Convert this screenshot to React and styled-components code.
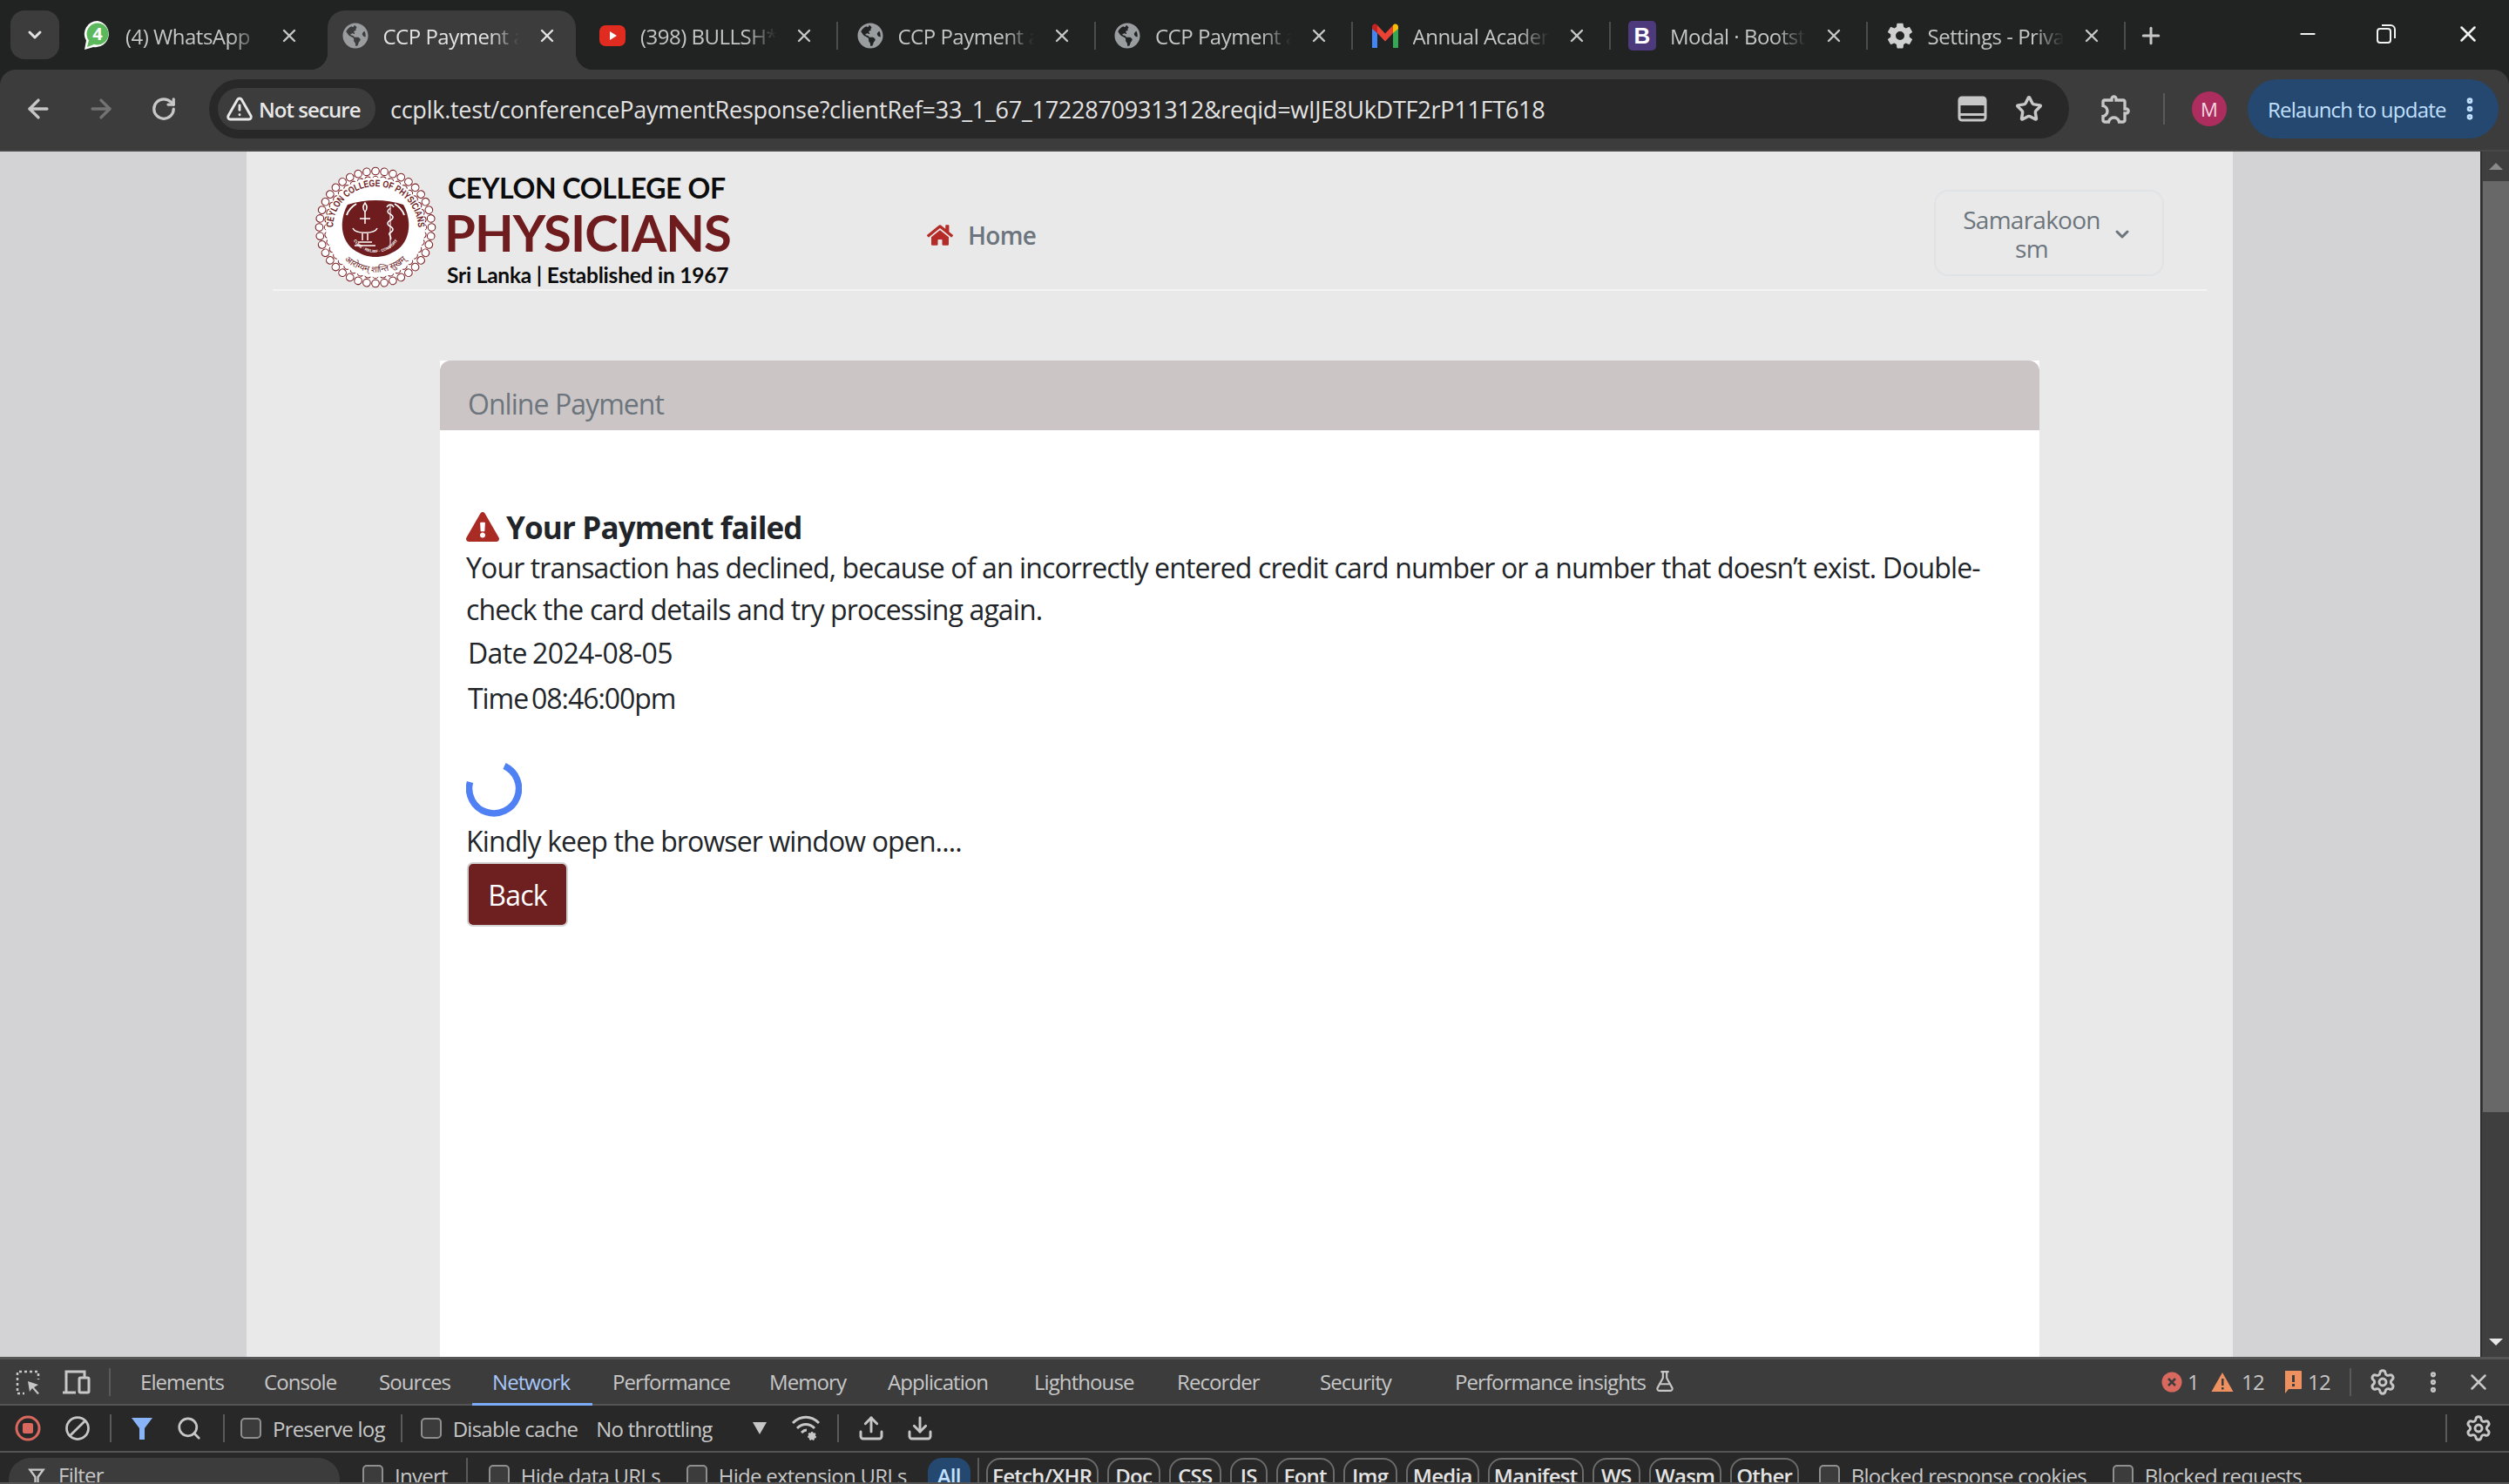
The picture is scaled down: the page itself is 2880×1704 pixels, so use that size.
import React from "react";
import styled, { createGlobalStyle } from "styled-components";
import {
  ArrowLeft, ArrowRight, RotateCw, TriangleAlert, Star, EllipsisVertical, Plus, Minus, X,
  Ban, Search, Upload, Download, Settings, FlaskConical, ChevronDown,
} from "lucide-react";
import { FaGlobeAmericas, FaHome, FaExclamationTriangle } from "react-icons/fa";
import { IoSettingsSharp } from "react-icons/io5";
import { MdOutlineExtension } from "react-icons/md";

const UI = `"Open Sans", "Noto Sans", sans-serif`;

const Global = createGlobalStyle`
  html, body { margin: 0; padding: 0; background: #212323; }
  * { box-sizing: border-box; }
  body { font-family: ${UI}; }
`;

const Shell = styled.div`
  width: 2880px;
  height: 1704px;
  display: flex;
  flex-direction: column;
  overflow: hidden;
`;

/* browser chrome */
const TabStrip = styled.div`
  height: 80px;
  flex: none;
  display: flex;
  align-items: flex-end;
  background: #212323;
`;
const TabMenu = styled.div`
  width: 56px;
  height: 56px;
  margin: 0 12px 12px 12px;
  border-radius: 16px;
  background: #3c3c3c;
  color: #e3e3e3;
  display: flex;
  align-items: center;
  justify-content: center;
`;
const Tab = styled.div`
  position: relative;
  width: 285px;
  height: 68px;
  margin-right: 10.5px;
  padding: 0 21px 10px 16px;
  display: flex;
  align-items: center;
  border-radius: 20px 20px 0 0;
  background: ${(p) => (p.$active ? "#3c3c3c" : "transparent")};
  color: ${(p) => (p.$active ? "#e3e3e3" : "#c4c7c5")};
  &::after {
    content: "";
    display: ${(p) => (p.$sep ? "block" : "none")};
    position: absolute;
    right: -6px;
    top: 13px;
    width: 2px;
    height: 32px;
    background: #4b4d4d;
  }
`;
const Flare = styled.span`
  position: absolute;
  bottom: 0;
  ${(p) => (p.$side === "left" ? "left: -20px;" : "right: -20px;")}
  width: 20px;
  height: 20px;
  background: radial-gradient(circle at ${(p) => (p.$side === "left" ? "0 0" : "100% 0")}, transparent 20px, #3c3c3c 20.5px);
`;
const TabIcon = styled.span`
  width: 32px;
  height: 36px;
  flex: none;
  display: flex;
  align-items: center;
  justify-content: center;
`;
const TabTitle = styled.span`
  width: 156px;
  margin-left: 16px;
  flex: none;
  font-size: 24px;
  letter-spacing: -0.5px;
  white-space: nowrap;
  overflow: hidden;
  -webkit-mask-image: linear-gradient(90deg, #000 78%, transparent 100%);
  mask-image: linear-gradient(90deg, #000 78%, transparent 100%);
`;
const TabClose = styled.span`
  margin-left: auto;
  display: flex;
  color: inherit;
`;
const NewTab = styled.div`
  margin: 0 0 24px 10px;
  color: #c7c7c7;
  display: flex;
`;
const WinControls = styled.div`
  margin-left: auto;
  height: 80px;
  display: flex;
  color: #f2f2f2;
`;
const WinButton = styled.div`
  width: ${(p) => p.$w}px;
  padding-bottom: 2px;
  display: flex;
  align-items: center;
  justify-content: center;
`;
const BootstrapMark = styled.span`
  width: 32px;
  height: 34px;
  border-radius: 5px;
  background: #4d3a7d;
  color: #fff;
  font: 700 26px "Liberation Sans", sans-serif;
  display: flex;
  align-items: center;
  justify-content: center;
`;

const Toolbar = styled.div`
  height: 94px;
  flex: none;
  padding: 0 12px 2px 8px;
  display: flex;
  align-items: center;
  background: #3c3c3c;
  border-bottom: 2px solid #474747;
  border-radius: 18px 18px 0 0;
  color: #c7c7c7;
`;
const NavButton = styled.div`
  width: 72px;
  display: flex;
  justify-content: center;
  color: ${(p) => (p.$dim ? "#737373" : "#c7c7c7")};
`;
const Omnibox = styled.div`
  width: 2135px;
  height: 68px;
  margin-left: 16px;
  padding: 0 30px 0 10px;
  display: flex;
  align-items: center;
  border-radius: 34px;
  background: #282828;
`;
const SecurityChip = styled.div`
  height: 48px;
  width: 181px;
  padding-left: 9px;
  display: flex;
  align-items: center;
  gap: 6px;
  border-radius: 24px;
  background: #3c3c3c;
  color: #e8e8e8;
  font-size: 24px;
  font-weight: 600;
  letter-spacing: -0.95px;
  white-space: nowrap;
`;
const Url = styled.div`
  margin-left: 17px;
  font-size: 27px;
  letter-spacing: -0.25px;
  color: #e3e3e3;
  white-space: nowrap;
`;
const OmniIcons = styled.div`
  margin-left: auto;
  display: flex;
  align-items: center;
  gap: 32px;
`;
const ToolSlot = styled.div`
  width: 108px;
  display: flex;
  justify-content: center;
`;
const ToolSep = styled.div`
  width: 2px;
  height: 36px;
  background: #5a5a5a;
`;
const Avatar = styled.div`
  width: 40px;
  height: 40px;
  margin: 0 24px 0 31px;
  border-radius: 50%;
  background: #ad2d5e;
  color: #f5d7e3;
  font-size: 22px;
  display: flex;
  align-items: center;
  justify-content: center;
`;
const Relaunch = styled.div`
  width: 288px;
  height: 68px;
  padding-left: 23px;
  display: flex;
  align-items: center;
  border-radius: 34px;
  background: #254870;
  color: #c2e0ff;
  font-size: 24px;
  letter-spacing: -0.75px;
  white-space: nowrap;
`;
const RelaunchDots = styled.span`
  margin-left: 11px;
  display: flex;
`;

/* page */
const Viewport = styled.div`
  flex: 1;
  min-height: 0;
  display: grid;
  grid-template-columns: 283px 2280px 1fr 33px;
  background: #d3d3d5;
`;
const Gutter = styled.div``;
const Page = styled.div`
  background: #e9e9e9;
  display: flex;
  flex-direction: column;
  min-height: 0;
`;
const PageHeader = styled.header`
  height: 160px;
  margin: 0 30px;
  padding: 16px 49px 0 48px;
  flex: none;
  display: flex;
  align-items: flex-start;
  border-bottom: 2px solid #f4f4f4;
`;
const SealSvg = styled.svg`
  flex: none;
`;
const LogoText = styled.div`
  margin-left: 9px;
  display: flex;
  flex-direction: column;
  font-family: Lato, "Open Sans", sans-serif;
  font-weight: 700;
  color: #0c0c0c;
`;
const LogoTop = styled.div`
  font-size: 32px;
  line-height: 40px;
  margin: 6px 0 0 4px;
  letter-spacing: -0.4px;
  white-space: nowrap;
`;
const LogoMain = styled.div`
  font-size: 58px;
  line-height: 60px;
  margin-top: 1px;
  color: #6e1c1e;
  letter-spacing: -0.9px;
  white-space: nowrap;
`;
const LogoSub = styled.div`
  font-size: 24.5px;
  line-height: 28px;
  margin: 5px 0 0 3px;
  letter-spacing: -0.22px;
  white-space: nowrap;
`;
const HomeLink = styled.div`
  margin: 61px 0 0 225px;
  display: flex;
  align-items: center;
  gap: 17px;
  color: #6c757d;
  font-size: 28px;
  font-weight: 600;
  letter-spacing: -0.7px;
`;
const UserMenu = styled.div`
  margin: 28px 0 0 auto;
  width: 264px;
  height: 99px;
  padding: 3px 0 0 30px;
  display: flex;
  align-items: center;
  border: 2px solid #e0e3e6;
  border-radius: 16px;
  color: #6c757d;
  font-size: 28px;
  line-height: 33px;
  letter-spacing: -0.75px;
`;
const UserName = styled.div`
  width: 160px;
  text-align: center;
`;
const UserCaret = styled.span`
  margin-left: 12px;
  display: flex;
  color: #6c757d;
`;
const Card = styled.section`
  width: 1836px;
  margin: 80px 0 0 222px;
  flex: 1;
  background: #fff;
  display: flex;
  flex-direction: column;
`;
const CardHead = styled.div`
  height: 80px;
  padding: 28px 32px 0;
  background: #cbc5c5;
  border-radius: 12px 12px 0 0;
  color: #6c757d;
  font-size: 32px;
  line-height: 44px;
  letter-spacing: -0.95px;
`;
const CardBody = styled.div`
  padding: 90px 30px 0;
  color: #212529;
  font-size: 32px;
  line-height: 48px;
  letter-spacing: -0.88px;
`;
const FailTitle = styled.div`
  display: flex;
  align-items: center;
  gap: 8px;
  font-size: 35px;
  line-height: 44px;
  font-weight: 700;
  letter-spacing: -0.85px;
  color: #212529;
  svg { color: #a92b23; margin-bottom: 2px; }
`;
const Para = styled.p`
  margin: 0;
`;
const InfoLine = styled.div`
  margin: ${(p) => p.$top}px 0 0 2px;
  display: flex;
  gap: ${(p) => p.$gap}px;
  letter-spacing: ${(p) => p.$ls}px;
`;
const SpinnerWrap = styled.div`
  margin-top: 48px;
  height: 64px;
  display: flex;
`;
const Kindly = styled.div`
  margin: 6px 0 2px;
  line-height: 44px;
`;
const BackButton = styled.button`
  display: block;
  width: 116px;
  height: 74px;
  margin-left: 1px;
  padding: 0;
  border: 2px solid #d2d2d2;
  border-radius: 7px;
  background: #6e2020;
  color: #fff;
  font-family: ${UI};
  font-size: 32px;
  letter-spacing: -0.8px;
`;

const ScrollTrack = styled.div`
  position: relative;
  background: #3f3f3f;
  border-left: 2px solid #2e2e2e;
  display: flex;
  flex-direction: column;
  align-items: stretch;
`;
const ScrollArrow = styled.div`
  height: 34px;
  flex: none;
  display: flex;
  align-items: center;
  justify-content: center;
  &::before {
    content: "";
    border-left: 8px solid transparent;
    border-right: 8px solid transparent;
    ${(p) => (p.$down ? "border-top: 8px solid #e8e8e8;" : "border-bottom: 8px solid #8a8a8a;")}
  }
`;
const ScrollThumb = styled.div`
  height: 1069px;
  margin-left: 1px;
  background: #686868;
`;
const ScrollSpace = styled.div`
  flex: 1;
`;

/* devtools */
const DevTools = styled.div`
  height: 146px;
  flex: none;
  border-top: 3px solid #555;
  border-bottom: 2px solid #555;
  background: #282828;
  color: #c7c7c7;
  display: flex;
  flex-direction: column;
  font-size: 24px;
  letter-spacing: -0.75px;
`;
const DevTabs = styled.div`
  height: 53px;
  flex: none;
  padding-left: 12px;
  display: flex;
  align-items: center;
  background: #3c3c3c;
  border-bottom: 2px solid #555;
`;
const DevTab = styled.div`
  width: ${(p) => p.$w}px;
  height: 52px;
  padding-left: 23px;
  display: flex;
  align-items: center;
  gap: 9px;
  white-space: nowrap;
  letter-spacing: -0.92px;
  color: ${(p) => (p.$active ? "#a8c7fa" : "#c7c7c7")};
  border-bottom: 3px solid ${(p) => (p.$active ? "#7cacf8" : "transparent")};
  margin-bottom: -2px;
`;
const DevIcon = styled.span`
  width: ${(p) => p.$w || 56}px;
  margin-left: ${(p) => p.$ml || 0}px;
  flex: none;
  display: flex;
  justify-content: center;
  color: ${(p) => p.$c || "#c7c7c7"};
  svg { flex: none; }
`;
const DevSep = styled.span`
  width: 2px;
  height: 32px;
  flex: none;
  margin-left: ${(p) => p.$l || 0}px;
  margin-right: ${(p) => p.$r || 0}px;
  background: #5a5a5a;
`;
const DevRight = styled.div`
  margin-left: auto;
  display: flex;
  align-items: center;
`;
const Counter = styled.span`
  display: flex;
  align-items: center;
  gap: ${(p) => p.$gap || 6}px;
  margin-right: ${(p) => p.$mr}px;
`;
const DevBar = styled.div`
  height: 54px;
  flex: none;
  padding-left: 4px;
  display: flex;
  align-items: center;
  border-bottom: 2px solid #555;
`;
const Check = styled.span`
  width: 24px;
  height: 24px;
  flex: none;
  margin-left: ${(p) => p.$ml || 0}px;
  border: 2px solid #8f8f8f;
  border-radius: 5px;
  background: #3c3c3c;
`;
const CheckLabel = styled.span`
  margin-left: ${(p) => p.$ml || 13}px;
  white-space: nowrap;
`;
const FilterBar = styled.div`
  flex: 1;
  min-height: 0;
  padding: 6px 0 0 10px;
  display: flex;
  align-items: flex-start;
  overflow: hidden;
`;
const FilterInput = styled.div`
  width: 380px;
  height: 50px;
  padding-left: 22px;
  flex: none;
  display: flex;
  gap: 15px;
  border-radius: 25px;
  background: #3c3c3c;
  line-height: 40px;
  svg { margin-top: 11px; }
`;
const Pill = styled.span`
  width: ${(p) => p.$w}px;
  height: 50px;
  flex: none;
  margin-left: ${(p) => (p.$ml === undefined ? 10 : p.$ml)}px;
  border: ${(p) => (p.$on ? "none" : "2px solid #6b6b6b")};
  border-radius: 16px;
  background: ${(p) => (p.$on ? "#254870" : "transparent")};
  color: ${(p) => (p.$on ? "#c2e0ff" : "#e3e3e3")};
  text-align: center;
  line-height: ${(p) => (p.$on ? 42 : 38)}px;
  font-weight: 600;
  white-space: nowrap;
`;
const CheckItem = styled.span`
  display: flex;
  align-items: center;
  height: 40px;
`;
const ClearIcon = styled(Ban)`
  transform: rotate(90deg);
`;

const Globe = () => <FaGlobeAmericas size={30} color="#9a9da0" />;

const WhatsAppIcon = () => (
  <svg width="32" height="36" viewBox="0 0 32 36">
    <path d="M16 1a15 15 0 0 0-13 22.6L1 34l10.400-3A15 15 0 1 0 16 1z" fill="#fff" />
    <circle cx="16" cy="16" r="12.500" fill="#5cb85c" />
    <path d="M4 31l2-8 6 5z" fill="#5cb85c" />
    <text x="16" y="23" textAnchor="middle" fontFamily="Open Sans" fontWeight="700" fontSize="20" fill="#fff">4</text>
  </svg>
);

const YouTubeIcon = () => (
  <svg width="32" height="32" viewBox="0 0 32 32">
    <rect x="1" y="4" width="30" height="24" rx="7" fill="#e02c20" />
    <path d="M13 11l8 5-8 5z" fill="#fff" />
  </svg>
);

const GmailIcon = () => (
  <svg width="32" height="30" viewBox="0 0 32 30">
    <path d="M1 5v24h6V12z" fill="#4285f4" />
    <path d="M31 5v24h-6V12z" fill="#34a853" />
    <path d="M7 3l9 9.500L25 3v9l-9 9.500L7 12z" fill="#ea4335" />
    <path d="M1 5c0-3.500 4-4.500 6-2v9L1 7z" fill="#c5221f" />
    <path d="M31 5c0-3.500-4-4.500-6-2v9l6-5z" fill="#fbbc04" />
  </svg>
);

const CardIcon = () => (
  <svg width="34" height="30" viewBox="0 0 34 30" fill="none">
    <rect x="2" y="2" width="30" height="26" rx="3" stroke="#c7c7c7" strokeWidth="3" />
    <rect x="2" y="2" width="30" height="9" fill="#c7c7c7" />
    <rect x="2" y="20" width="30" height="3" fill="#c7c7c7" />
  </svg>
);

const RestoreIcon = () => (
  <svg width="24" height="24" viewBox="0 0 24 24" fill="none" stroke="#f2f2f2" strokeWidth="2">
    <rect x="2" y="6" width="15" height="16" rx="3" />
    <path d="M7 2h10a5 5 0 0 1 5 5v10" />
  </svg>
);

const InspectIcon = () => (
  <svg width="30" height="30" viewBox="0 0 30 30" fill="none" stroke="#c7c7c7" strokeWidth="2.500">
    <path d="M2 25V3h24v9" strokeDasharray="3 3" />
    <path d="M2 28h8" strokeDasharray="3 3" />
    <path d="M14 14l12 4-5 3 6 7-2 1-6-7-3 4z" fill="#c7c7c7" stroke="none" />
  </svg>
);

const DeviceIcon = () => (
  <svg width="34" height="30" viewBox="0 0 34 30" fill="none" stroke="#c7c7c7" strokeWidth="3">
    <path d="M5 26V3h21v6" />
    <path d="M1 27h15" />
    <rect x="20" y="10" width="11" height="17" rx="1.500" />
  </svg>
);

const RecordIcon = () => (
  <svg width="30" height="30" viewBox="0 0 30 30">
    <circle cx="15" cy="15" r="13" fill="none" stroke="#d9685f" strokeWidth="3" />
    <rect x="9" y="9" width="12" height="12" rx="2" fill="#d9685f" />
  </svg>
);

const FunnelIcon = ({ color, filled, size = 26 }) => (
  <svg width={size} height={size + 2} viewBox="0 0 26 28">
    {filled ? (
      <path d="M1 2h24l-9 12v13h-6V14z" fill={color} />
    ) : (
      <path d="M3 3h20l-8 11v12h-4V14z" fill="none" stroke={color} strokeWidth="3" />
    )}
  </svg>
);

const NetworkConditions = () => (
  <svg width="34" height="34" viewBox="0 0 34 34" fill="none" stroke="#c7c7c7" strokeWidth="3">
    <path d="M2 11c9-9 21-9 30 0" />
    <path d="M7 17c6-6 14-6 20 0" />
    <path d="M12 22c2-2 4-3 6-3" />
    <circle cx="24" cy="26" r="4" fill="#c7c7c7" strokeWidth="2" strokeDasharray="2 1.500" />
  </svg>
);

const ErrorDot = () => (
  <svg width="24" height="24" viewBox="0 0 24 24">
    <circle cx="12" cy="12" r="11.500" fill="#d9685f" />
    <path d="M8 8l8 8M16 8l-8 8" stroke="#3c3c3c" strokeWidth="2.500" />
  </svg>
);

const WarnIcon = () => (
  <svg width="26" height="24" viewBox="0 0 26 24">
    <path d="M13 1l12.500 22H.5z" fill="#ee9060" />
    <rect x="12" y="8" width="2.500" height="8" fill="#3c3c3c" />
    <rect x="12" y="18" width="2.500" height="2.500" fill="#3c3c3c" />
  </svg>
);

const IssueIcon = () => (
  <svg width="22" height="28" viewBox="0 0 22 28">
    <path d="M2 1h18a1 1 0 0 1 1 1v19a1 1 0 0 1-1 1H6l-4 5z" fill="#ee9060" />
    <rect x="10" y="6" width="3" height="8" fill="#3c3c3c" />
    <rect x="10" y="16" width="3" height="3" fill="#3c3c3c" />
  </svg>
);

const scallops = Array.from({ length: 40 }, (_, i) => (i * 360) / 40);

const CollegeSeal = () => (
  <SealSvg width="140" height="142" viewBox="0 0 140 140">
    <defs>
      <path id="sealTop" d="M21 72a49 49 0 1 1 98 0" />
      <path id="sealBottom" d="M20 84a52 52 0 0 0 100 0" />
      <path id="sealMotto" d="M44 84a30 30 0 0 0 52 0" />
    </defs>
    <circle cx="70" cy="70" r="68" fill="#fff" />
    {scallops.map((a) => (
      <g key={a} transform={`rotate(${a} 70 70)`}>
        <circle cx="70" cy="5.500" r="4.300" fill="#fff" stroke="#7c2327" strokeWidth="1.100" />
        <path d="M66.500 15c0-5 7-5 7 0" fill="none" stroke="#7c2327" strokeWidth="1" />
      </g>
    ))}
    <circle cx="70" cy="70" r="57" fill="#fff" />
    <text fontFamily="Liberation Sans" fontWeight="700" fontSize="11" fill="#6e1c1e">
      <textPath href="#sealTop" startOffset="50%" textAnchor="middle" textLength="150" lengthAdjust="spacingAndGlyphs">CEYLON COLLEGE OF PHYSICIANS</textPath>
    </text>
    <path d="M38 44Q70 34 102 44C112 62 110 84 96 95C86 102 78 104 70 104C62 104 54 102 44 95C30 84 28 62 38 44z" fill="#6e1c1e" />
    <path d="M37 56c2-6 6-10 11-13" fill="none" stroke="#fff" strokeWidth="2" />
    <path d="M103 56c-2-6-6-10-11-13" fill="none" stroke="#fff" strokeWidth="2" />
    <g fill="none" stroke="#fff" strokeWidth="1.500">
      <path d="M58 42c3 4 3 7 0 10-3-3-3-6 0-10z" />
      <path d="M58 52v14M52 60h12M44 71c3 7 25 7 28 0M55 77v8M61 77v8M50 87h16M46 91h24" />
      <path d="M87 48c-4 3-4 5 0 7s4 5 0 7-4 5 0 7 4 5 0 7 3 5 0 8" />
      <path d="M83 47c2-4 6-4 8 0" />
      <path d="M87 44v50" strokeWidth="1" />
    </g>
    <text fontFamily="Liberation Sans" fontWeight="700" fontSize="4.500" fill="#fff">
      <textPath href="#sealMotto" startOffset="50%" textAnchor="middle">CURE · RELIEF · COMFORT</textPath>
    </text>
    <text fontFamily="Noto Sans, DejaVu Sans" fontSize="10" fill="#6e1c1e">
      <textPath href="#sealBottom" startOffset="50%" textAnchor="middle">आरोग्यम् शान्ति सुखम्</textPath>
    </text>
  </SealSvg>
);

const Spinner = () => (
  <svg width="64" height="64" viewBox="0 0 64 64">
    <path d="M44 5.500A28.500 28.500 0 1 1 4.500 24" fill="none" stroke="#4f81f4" strokeWidth="7.500" />
  </svg>
);

const tabs = [
  { title: "(4) WhatsApp", icon: <WhatsAppIcon /> },
  { title: "CCP Payment and Registration", icon: <Globe />, active: true },
  { title: "(398) BULLSH*T", icon: <YouTubeIcon />, sep: true },
  { title: "CCP Payment and Registration", icon: <Globe />, sep: true },
  { title: "CCP Payment and Registration", icon: <Globe />, sep: true },
  { title: "Annual Academic Sessions", icon: <GmailIcon />, sep: true },
  { title: "Modal · Bootstrap", icon: <BootstrapMark>B</BootstrapMark>, sep: true },
  { title: "Settings - Privacy", icon: <IoSettingsSharp size={32} color="#d0d0d0" />, sep: true },
];

const devTabs = [
  ["Elements", 142],
  ["Console", 132],
  ["Sources", 130],
  ["Network", 138],
  ["Performance", 180],
  ["Memory", 136],
  ["Application", 168],
  ["Lighthouse", 164],
  ["Recorder", 164],
  ["Security", 155],
];

const pills = [
  ["Fetch/XHR", 129], ["Doc", 61], ["CSS", 60], ["JS", 43], ["Font", 67], ["Img", 62],
  ["Media", 84], ["Manifest", 110], ["WS", 55], ["Wasm", 83], ["Other", 79],
];

export default function App() {
  return (
    <Shell>
      <Global />
      <TabStrip>
        <TabMenu><ChevronDown size={24} strokeWidth={3} /></TabMenu>
        {tabs.map((t, i) => (
          <Tab key={i} $active={t.active} $sep={t.sep}>
            {t.active && <Flare $side="left" />}
            {t.active && <Flare $side="right" />}
            <TabIcon>{t.icon}</TabIcon>
            <TabTitle>{t.title}</TabTitle>
            <TabClose><X size={24} strokeWidth={2.4} /></TabClose>
          </Tab>
        ))}
        <NewTab><Plus size={30} strokeWidth={2.4} /></NewTab>
        <WinControls>
          <WinButton $w={88}><Minus size={26} strokeWidth={2} /></WinButton>
          <WinButton $w={92}><RestoreIcon /></WinButton>
          <WinButton $w={95}><X size={30} strokeWidth={2} /></WinButton>
        </WinControls>
      </TabStrip>

      <Toolbar>
        <NavButton><ArrowLeft size={34} strokeWidth={2.4} /></NavButton>
        <NavButton $dim><ArrowRight size={34} strokeWidth={2.4} /></NavButton>
        <NavButton><RotateCw size={30} strokeWidth={2.6} /></NavButton>
        <Omnibox>
          <SecurityChip><TriangleAlert size={32} strokeWidth={2.2} />Not secure</SecurityChip>
          <Url>ccplk.test/conferencePaymentResponse?clientRef=33_1_67_1722870931312&amp;reqid=wIJE8UkDTF2rP11FT618</Url>
          <OmniIcons>
            <CardIcon />
            <Star size={32} strokeWidth={2.6} />
          </OmniIcons>
        </Omnibox>
        <ToolSlot><MdOutlineExtension size={40} /></ToolSlot>
        <ToolSep />
        <Avatar>M</Avatar>
        <Relaunch>
          Relaunch to update
          <RelaunchDots><EllipsisVertical size={32} strokeWidth={3} /></RelaunchDots>
        </Relaunch>
      </Toolbar>

      <Viewport>
        <Gutter />
        <Page>
          <PageHeader>
            <CollegeSeal />
            <LogoText>
              <LogoTop>CEYLON COLLEGE OF</LogoTop>
              <LogoMain>PHYSICIANS</LogoMain>
              <LogoSub>Sri Lanka | Established in 1967</LogoSub>
            </LogoText>
            <HomeLink><FaHome size={30} color="#b52b27" />Home</HomeLink>
            <UserMenu>
              <UserName>Samarakoon sm</UserName>
              <UserCaret><ChevronDown size={24} strokeWidth={3} /></UserCaret>
            </UserMenu>
          </PageHeader>
          <Card>
            <CardHead>Online Payment</CardHead>
            <CardBody>
              <FailTitle><FaExclamationTriangle size={38} />Your Payment failed</FailTitle>
              <Para>
                Your transaction has declined, because of an incorrectly entered credit card number or a number that doesn’t exist. Double-check the card details and try processing again.
              </Para>
              <InfoLine $top={2} $gap={6} $ls={-0.6}><span>Date</span><span>2024-08-05</span></InfoLine>
              <InfoLine $top={4} $gap={4} $ls={-1.05}><span>Time</span><span>08:46:00pm</span></InfoLine>
              <SpinnerWrap><Spinner /></SpinnerWrap>
              <Kindly>Kindly keep the browser window open....</Kindly>
              <BackButton>Back</BackButton>
            </CardBody>
          </Card>
        </Page>
        <Gutter />
        <ScrollTrack>
          <ScrollArrow />
          <ScrollThumb />
          <ScrollSpace />
          <ScrollArrow $down />
        </ScrollTrack>
      </Viewport>

      <DevTools>
        <DevTabs>
          <DevIcon $w={41}><InspectIcon /></DevIcon>
          <DevIcon $w={70}><DeviceIcon /></DevIcon>
          <DevSep $l={2} $r={11} />
          {devTabs.map(([name, w]) => (
            <DevTab key={name} $w={w} $active={name === "Network"}>{name}</DevTab>
          ))}
          <DevTab $w={300}>Performance insights <FlaskConical size={26} strokeWidth={2} /></DevTab>
          <DevRight>
            <Counter $mr={14}><ErrorDot />1</Counter>
            <Counter $mr={22} $gap={9}><WarnIcon />12</Counter>
            <Counter $mr={22}><IssueIcon />12</Counter>
            <DevSep />
            <DevIcon $w={72}><Settings size={32} strokeWidth={2.2} /></DevIcon>
            <DevIcon $w={44}><EllipsisVertical size={30} strokeWidth={3} /></DevIcon>
            <DevIcon $w={60}><X size={30} strokeWidth={2} /></DevIcon>
            <DevIcon $w={5} />
          </DevRight>
        </DevTabs>
        <DevBar>
          <DevIcon $w={56}><RecordIcon /></DevIcon>
          <DevIcon $w={58}><ClearIcon size={30} strokeWidth={2.2} /></DevIcon>
          <DevSep $l={8} $r={8} />
          <DevIcon $w={54}><FunnelIcon color="#8ab4f8" filled /></DevIcon>
          <DevIcon $w={54}><Search size={30} strokeWidth={2.2} /></DevIcon>
          <DevSep $l={12} />
          <Check $ml={18} />
          <CheckLabel>Preserve log</CheckLabel>
          <DevSep $l={18} />
          <Check $ml={21} />
          <CheckLabel>Disable cache</CheckLabel>
          <CheckLabel $ml={21}>No throttling</CheckLabel>
          <DevIcon $w={42} $ml={33}><svg width="16" height="14" viewBox="0 0 16 14"><path d="M0 0h16L8 14z" fill="#c7c7c7" /></svg></DevIcon>
          <DevIcon $w={64}><NetworkConditions /></DevIcon>
          <DevSep $l={4} />
          <DevIcon $w={74}><Upload size={32} strokeWidth={2.2} /></DevIcon>
          <DevIcon $w={38}><Download size={32} strokeWidth={2.2} /></DevIcon>
          <DevRight>
            <DevSep />
            <DevIcon $w={71}><Settings size={32} strokeWidth={2.2} /></DevIcon>
          </DevRight>
        </DevBar>
        <FilterBar>
          <FilterInput><FunnelIcon color="#c7c7c7" size={20} />Filter</FilterInput>
          <CheckItem><Check $ml={26} /><CheckLabel>Invert</CheckLabel></CheckItem>
          <DevSep $l={21} $r={24} />
          <CheckItem><Check /><CheckLabel>Hide data URLs</CheckLabel></CheckItem>
          <CheckItem><Check $ml={30} /><CheckLabel>Hide extension URLs</CheckLabel></CheckItem>
          <Pill $on $w={49} $ml={24}>All</Pill>
          <DevSep $l={8} $r={8} />
          {pills.map(([name, w], i) => (
            <Pill key={name} $w={w} $ml={i === 0 ? 0 : 10}>{name}</Pill>
          ))}
          <CheckItem><Check $ml={23} /><CheckLabel>Blocked response cookies</CheckLabel></CheckItem>
          <CheckItem><Check $ml={30} /><CheckLabel>Blocked requests</CheckLabel></CheckItem>
        </FilterBar>
      </DevTools>
    </Shell>
  );
}
